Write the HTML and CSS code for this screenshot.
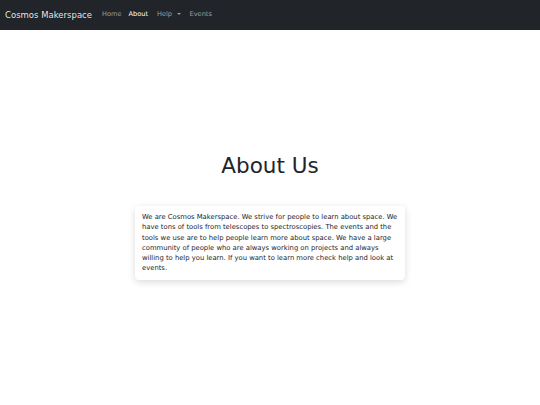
FILE: index.html
```html
<!DOCTYPE html>
<html lang="en">
<head>
<meta charset="utf-8">
<title>About - Cosmos Makerspace</title>
<link rel="stylesheet" href="styles.css">
</head>
<body>
<nav class="navbar">
  <a class="brand" href="#">Cosmos Makerspace</a>
  <ul class="nav">
    <li class="nav-item first"><a class="nav-link" href="#">Home</a></li>
    <li class="nav-item"><a class="nav-link active" href="#">About</a></li>
    <li class="nav-item"><a class="nav-link dropdown" href="#">Help</a></li>
    <li class="nav-item"><a class="nav-link" href="#">Events</a></li>
  </ul>
</nav>
<main class="main">
  <h1 class="title">About Us</h1>
  <div class="card">
    <p class="card-text">We are Cosmos Makerspace. We strive for people to learn about space. We have tons of tools from telescopes to spectroscopies. The events and the tools we use are to help people learn more about space. We have a large community of people who are always working on projects and always willing to help you learn. If you want to learn more check help and look at events.</p>
  </div>
</main>
</body>
</html>
```
FILE: styles.css
```css
* { box-sizing: border-box; }
html, body { margin: 0; height: 100%; }
body {
  font-family: "DejaVu Sans", sans-serif;
  color: #212529;
  background: #fff;
  display: flex;
  flex-direction: column;
}
a { text-decoration: none; }
.navbar {
  height: 30px;
  background: #212529;
  display: flex;
  align-items: center;
  padding: 0 5px;
  flex-shrink: 0;
}
.brand {
  color: rgba(255,255,255,0.9);
  font-size: 8.5px;
  line-height: 1.5;
  margin-right: 10px;
}
.nav {
  list-style: none;
  margin: 0;
  padding: 0;
  display: flex;
  align-items: center;
  gap: 9px;
  font-size: 6.6px;
  line-height: 1.5;
}
.nav-item.first { margin-right: -2px; }
.nav-link {
  color: rgba(255,255,255,0.55);
}
.nav-link.active { color: #fff; }
.dropdown::after {
  content: "";
  display: inline-block;
  margin-left: 4.5px;
  vertical-align: 1.5px;
  border-top: 2px solid;
  border-left: 2px solid transparent;
  border-right: 2px solid transparent;
}
.main {
  flex: 1;
  display: flex;
  flex-direction: column;
  align-items: center;
  justify-content: center;
  padding-bottom: 2px;
}
.title {
  font-size: 21.5px;
  font-weight: 400;
  line-height: 1.2;
  margin: 0 0 27px;
}
.card {
  width: 270px;
  padding: 6px 7px 6px;
  border-radius: 4px;
  box-shadow: 0 2px 7px rgba(0,0,0,0.15);
}
.card-text {
  margin: 0;
  font-size: 6.8px;
  line-height: 10.2px;
}
```
